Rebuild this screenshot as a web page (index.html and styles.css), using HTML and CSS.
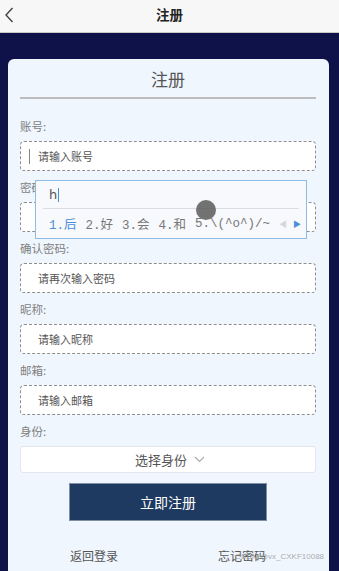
FILE: index.html
```html
<!DOCTYPE html>
<html lang="zh">
<head>
<meta charset="utf-8">
<link rel="stylesheet" href="styles.css">
</head>
<body>
<header class="topbar">
  <svg class="back" width="12" height="18" viewBox="0 0 12 18"><path d="M9.5 2 L3 9 L9.5 16" fill="none" stroke="#444" stroke-width="1.4"/></svg>
  <div class="topbar-title">注册</div>
</header>
<main class="page">
  <section class="card">
    <h1 class="card-title">注册</h1>
    <div class="group">
      <div class="label">账号:</div>
      <div class="field"><span class="caret"></span><span class="ph ph-focused">请输入账号</span></div>
    </div>
    <div class="group">
      <div class="label">密码:</div>
      <div class="field"></div>
    </div>
    <div class="group">
      <div class="label">确认密码:</div>
      <div class="field"><span class="ph">请再次输入密码</span></div>
    </div>
    <div class="group">
      <div class="label">昵称:</div>
      <div class="field"><span class="ph">请输入昵称</span></div>
    </div>
    <div class="group">
      <div class="label">邮箱:</div>
      <div class="field"><span class="ph">请输入邮箱</span></div>
    </div>
    <div class="group">
      <div class="label">身份:</div>
      <div class="select">选择身份
        <svg class="chev" width="11" height="7" viewBox="0 0 11 7"><path d="M1 1 L5.5 5.5 L10 1" fill="none" stroke="#aaa" stroke-width="1.1"/></svg>
      </div>
    </div>
    <button class="submit">立即注册</button>
    <div class="links">
      <span class="link">返回登录</span>
      <span class="link">忘记密码</span>
    </div>

    <div class="ime">
      <div class="ime-input">h<span class="ime-caret"></span></div>
      <div class="ime-cands">
        <span class="cand cand-active">1.后</span>
        <span class="cand">2.好</span>
        <span class="cand">3.会</span>
        <span class="cand">4.和</span>
        <span class="cand">5.\(^o^)/~</span>
        <span class="ime-arrows"><span class="arr arr-off">◀</span><span class="arr">▶</span></span>
      </div>
      <span class="touch"></span>
    </div>
  </section>
  <div class="watermark">CSDN @vx_CXKF10088</div>
</main>
</body>
</html>
```

FILE: styles.css
```css
* { box-sizing: border-box; }
html, body { margin: 0; padding: 0; }
body {
  font-family: "Noto Sans CJK SC", "Noto Sans", sans-serif;
  background: #0f1149;
  color: #555;
}
.topbar {
  height: 33px;
  background: #f7f7f7;
  border-bottom: 1px solid #c9c9c9;
  display: flex;
  align-items: center;
  justify-content: center;
  position: relative;
}
.back { position: absolute; left: 3px; top: 6px; }
.topbar-title {
  font-size: 13.5px;
  font-weight: bold;
  color: #222;
  line-height: 1;
  margin-top: -2px;
}
.page {
  padding: 26px 10px 0 8px;
  position: relative;
}
.card {
  position: relative;
  background: #eff6fe;
  border-radius: 6px;
  padding: 6px 13px 20px 12px;
}
.card-title {
  margin: 0;
  font-size: 17px;
  font-weight: normal;
  color: #555;
  text-align: center;
  line-height: 28px;
  padding-bottom: 4px;
  border-bottom: 2px solid #bdbdbd;
  margin-bottom: 17px;
}
.group { margin-bottom: 6px; }
.label {
  font-size: 11.5px;
  line-height: 20px;
  color: #7f7f7f;
  margin-bottom: 5px;
}
.field {
  height: 30px;
  background: #fff;
  border: 1px dashed #8e8e8e;
  border-radius: 4px;
  display: flex;
  align-items: center;
  padding-left: 17px;
}
.caret {
  width: 1px;
  height: 15px;
  background: #888;
  margin-left: -9px;
  margin-right: 8px;
}
.ph {
  font-size: 11px;
  color: #555;
}
.select {
  height: 27px;
  background: #fff;
  border: 1px solid #e3e6ec;
  border-radius: 3px;
  display: flex;
  align-items: center;
  justify-content: center;
  font-size: 13px;
  color: #555;
  padding-left: 4px;
}
.chev { margin-left: 7px; }
.submit {
  display: block;
  margin: 10px auto 0;
  width: 198px;
  height: 38px;
  background: #1e3a60;
  border: 1px solid #7f8fa3;
  color: #fff;
  font-family: inherit;
  font-size: 14px;
}
.links {
  width: 196px;
  margin: 25px auto 0;
  display: flex;
  justify-content: space-between;
  font-size: 12px;
  line-height: 20px;
  color: #555;
}
.ime {
  position: absolute;
  left: 27px;
  top: 121px;
  width: 272px;
  height: 59px;
  background: #f7f9fc;
  border: 1px solid #8cbbe6;
  padding: 0 7px;
}
.ime-input {
  height: 28px;
  border-bottom: 1px solid #d9dde3;
  font-size: 13px;
  color: #555;
  display: flex;
  align-items: center;
  padding-left: 6px;
  font-family: "DejaVu Sans", sans-serif;
}
.ime-caret {
  display: inline-block;
  width: 1px;
  height: 14px;
  background: #4a8fd8;
  margin-left: 1px;
}
.ime-cands {
  height: 29px;
  display: flex;
  align-items: center;
  padding-left: 6px;
  font-size: 12.5px;
  color: #777;
  font-family: "Liberation Mono", "Noto Sans CJK SC", monospace;
}
.cand { margin-right: 9px; white-space: nowrap; }
.cand-active { color: #4a8fd8; }
.ime-arrows { display: flex; gap: 6px; font-size: 8px; margin-left: 0; }
.arr { color: #4a8fd8; }
.arr-off { color: #d4d8de; }
.touch {
  position: absolute;
  left: 160px;
  top: 19px;
  width: 20px;
  height: 20px;
  border-radius: 50%;
  background: rgba(90, 90, 90, 0.85);
  filter: blur(0.5px);
}
.watermark {
  position: absolute;
  left: 235px;
  top: 517px;
  font-family: "Liberation Sans", sans-serif;
  font-size: 8px;
  line-height: 14px;
  color: rgba(150, 150, 150, 0.8);
  white-space: nowrap;
}
```
